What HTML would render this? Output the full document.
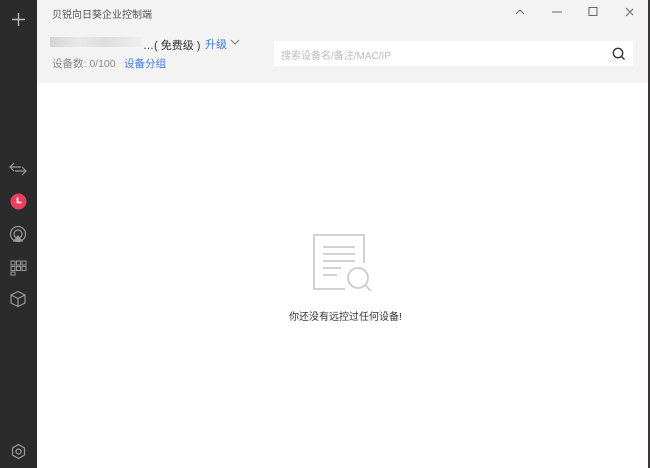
<!DOCTYPE html>
<html><head><meta charset="utf-8"><style>
*{margin:0;padding:0;box-sizing:border-box}
body{width:650px;height:468px;overflow:hidden;background:#fff;font-family:"Liberation Sans","Noto Sans CJK SC",sans-serif;position:relative}
.side{position:absolute;left:0;top:0;width:37px;height:468px;background:#2b2b2b}
.head{position:absolute;left:37px;top:0;width:611px;height:83px;background:#f3f3f3}
.redge{position:absolute;left:648px;top:0;width:2px;height:468px;background:#3a3532}
.t{position:absolute;font-size:10px;color:#444;white-space:nowrap}
.ic{position:absolute}
</style></head><body>
<div class="side"></div>
<div class="head"></div>
<div class="redge"></div>
<svg class="ic" style="left:10px;top:11px" width="17" height="17"><path d="M8.5 2v13M2 8.5h13" stroke="#bbb" stroke-width="1.4"/></svg>
<svg class="ic" style="left:8px;top:161px" width="20" height="16" fill="none" stroke="#999" stroke-width="1.2"><path d="M6 2L2 6l4 4M2 6h11M14 6l4 4-4 4M18 10H7"/></svg>
<svg class="ic" style="left:10px;top:193px" width="17" height="17"><circle cx="8.5" cy="8.5" r="8" fill="#e8405e"/><path d="M7.5 4.5v5h4" stroke="#fff" stroke-width="1.6" fill="none"/></svg>
<svg class="ic" style="left:9px;top:225px" width="18" height="18" fill="none" stroke="#999" stroke-width="1.2"><circle cx="9" cy="9" r="7.5"/><circle cx="9" cy="9" r="4"/><path d="M5 16l4-5 4 5z" fill="#999"/></svg>
<svg class="ic" style="left:10px;top:259px" width="17" height="17" fill="none" stroke="#999" stroke-width="1"><rect x="1" y="2" width="4" height="4"/><rect x="6.5" y="2" width="4" height="4"/><rect x="12" y="2" width="4" height="4"/><rect x="1" y="7.5" width="4" height="4"/><rect x="6.5" y="7.5" width="4" height="4"/><rect x="12" y="7.5" width="4" height="4"/><rect x="1" y="13" width="4" height="3"/></svg>
<svg class="ic" style="left:9px;top:290px" width="18" height="18" fill="none" stroke="#999" stroke-width="1.2"><path d="M9 1.5l7 3.5v8l-7 3.5-7-3.5V5zM2 5l7 3.5L16 5M9 8.5v8"/></svg>
<svg class="ic" style="left:10px;top:443px" width="17" height="17" fill="none" stroke="#999" stroke-width="1.2"><path d="M8.5 1.5l6 3.5v7l-6 3.5-6-3.5V5z"/><circle cx="8.5" cy="8.5" r="2.5"/></svg>
<div class="t" style="left:52px;top:6px;font-size:10px;color:#555">贝锐向日葵企业控制端</div>
<svg class="ic" style="left:513px;top:6px" width="120" height="12" fill="none" stroke="#666" stroke-width="1"><path d="M3 8l4-4 4 4M39 6h10M76 1.5h8v8h-8zM113 2l8 8M121 2l-8 8"/></svg>
<div class="ic" style="left:50px;top:37px;width:92px;height:10px;background:linear-gradient(90deg,#ccc,#e6e6e6 30%,#d8d8d8 60%,#eee);opacity:.8"></div>
<div class="t" style="left:143px;top:37px;font-size:11px;color:#333">…( 免费级 )</div>
<div class="t" style="left:205px;top:36px;font-size:11px;color:#3b7ddd">升级</div>
<svg class="ic" style="left:230px;top:38px" width="10" height="8" fill="none" stroke="#777"><path d="M1 2l4 4 4-4"/></svg>
<div class="t" style="left:52px;top:56px;font-size:10.5px;color:#888">设备数: 0/100</div>
<div class="t" style="left:124px;top:56px;font-size:10.5px;color:#3b7ddd">设备分组</div>
<div class="ic" style="left:274px;top:41px;width:359px;height:25px;background:#fff"></div>
<div class="t" style="left:281px;top:47px;font-size:10px;color:#bbb">搜索设备名/备注/MAC/IP</div>
<svg class="ic" style="left:612px;top:47px" width="14" height="14" fill="none" stroke="#333" stroke-width="1.4"><circle cx="6" cy="6" r="4.7"/><path d="M9.5 9.5l3 3"/></svg>
<svg class="ic" style="left:311px;top:233px" width="66" height="66" fill="none" stroke="#ccc" stroke-width="1.8"><path d="M34 56H3V2h50v28"/><path d="M12 14h32M12 21h32M12 28h32M12 35h18M12 42h14"/><circle cx="47" cy="45" r="10" fill="#fff"/><path d="M54 52l6 6"/></svg>
<div class="t" style="left:289px;top:308px;font-size:10px;color:#333">你还没有远控过任何设备!</div>
</body></html>
